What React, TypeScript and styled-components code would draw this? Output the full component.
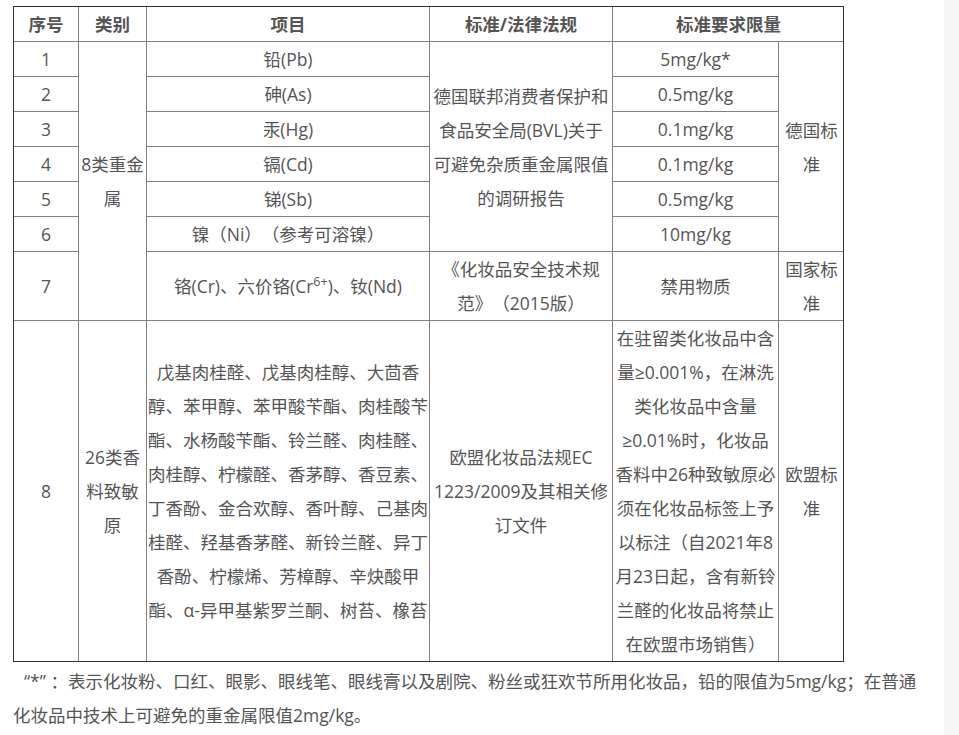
import React from "react";
import styled, { createGlobalStyle } from "styled-components";

const GlobalStyle = createGlobalStyle`
  body {
    margin: 0;
    background: #fff;
    font-family: "Open Sans", "Noto Sans CJK SC", sans-serif;
    text-spacing-trim: space-all;
  }
`;

const Page = styled.div`
  display: flex;
  height: 735px;
  overflow: hidden;
`;

const Main = styled.div`
  flex: 1;
  padding: 6px 0 0 13px;
  color: #555;
  font-size: 17.5px;
  line-height: 34px;
`;

const ScrollTrack = styled.div`
  width: 15px;
  background: #f7f7f7;
`;

const Frame = styled.div`
  width: 831px;
  box-sizing: border-box;
  border: 1px solid #333;
  overflow: hidden;
`;

const Table = styled.table`
  margin: -1px;
  width: 831px;
  border-collapse: collapse;
  table-layout: fixed;
`;

const Head = styled.th`
  border: 1px solid #808080;
  padding: 0 1px;
  font-weight: bold;
  color: #555;
  text-align: center;
  vertical-align: middle;
`;

const Cell = styled.td`
  border: 1px solid #808080;
  padding: 0 1px;
  text-align: center;
  vertical-align: middle;
  white-space: nowrap;
`;

const Sup = styled.sup`
  font-size: 12.5px;
  line-height: 0;
  vertical-align: 7px;
`;

const Note = styled.p`
  margin: 2px 0 0;
  width: 912px;
  text-indent: 11px;
`;

const Lines = (props: { lines: React.ReactNode[] }) => (
  <>
    {props.lines.map((line, i) => (
      <React.Fragment key={i}>
        {i > 0 && <br />}
        {line}
      </React.Fragment>
    ))}
  </>
);

const metals = [
  { no: "1", item: "铅(Pb)", limit: "5mg/kg*" },
  { no: "2", item: "砷(As)", limit: "0.5mg/kg" },
  { no: "3", item: "汞(Hg)", limit: "0.1mg/kg" },
  { no: "4", item: "镉(Cd)", limit: "0.1mg/kg" },
  { no: "5", item: "锑(Sb)", limit: "0.5mg/kg" },
  { no: "6", item: "镍（Ni）（参考可溶镍）", limit: "10mg/kg" },
];

const allergens = [
  "戊基肉桂醛、戊基肉桂醇、大茴香",
  "醇、苯甲醇、苯甲酸苄酯、肉桂酸苄",
  "酯、水杨酸苄酯、铃兰醛、肉桂醛、",
  "肉桂醇、柠檬醛、香茅醇、香豆素、",
  "丁香酚、金合欢醇、香叶醇、己基肉",
  "桂醛、羟基香茅醛、新铃兰醛、异丁",
  "香酚、柠檬烯、芳樟醇、辛炔酸甲",
  "酯、α-异甲基紫罗兰酮、树苔、橡苔",
];

const euLimit = [
  "在驻留类化妆品中含",
  "量≥0.001%，在淋洗",
  "类化妆品中含量",
  "≥0.01%时，化妆品",
  "香料中26种致敏原必",
  "须在化妆品标签上予",
  "以标注（自2021年8",
  "月23日起，含有新铃",
  "兰醛的化妆品将禁止",
  "在欧盟市场销售）",
];

const App = () => {
  return (
    <Page>
      <GlobalStyle />
      <Main>
        <Frame>
          <Table>
            <colgroup>
              <col style={{ width: 65 }} />
              <col style={{ width: 68 }} />
              <col style={{ width: 283 }} />
              <col style={{ width: 183 }} />
              <col style={{ width: 166 }} />
              <col style={{ width: 66 }} />
            </colgroup>
            <thead>
              <tr>
                <Head>序号</Head>
                <Head>类别</Head>
                <Head>项目</Head>
                <Head>标准/法律法规</Head>
                <Head colSpan={2}>标准要求限量</Head>
              </tr>
            </thead>
            <tbody>
              {metals.map((m, i) => (
                <tr key={m.no}>
                  <Cell>{m.no}</Cell>
                  {i === 0 && (
                    <Cell rowSpan={7}>
                      <Lines lines={["8类重金", "属"]} />
                    </Cell>
                  )}
                  <Cell>{m.item}</Cell>
                  {i === 0 && (
                    <Cell rowSpan={6}>
                      <Lines
                        lines={[
                          "德国联邦消费者保护和",
                          "食品安全局(BVL)关于",
                          "可避免杂质重金属限值",
                          "的调研报告",
                        ]}
                      />
                    </Cell>
                  )}
                  <Cell>{m.limit}</Cell>
                  {i === 0 && (
                    <Cell rowSpan={6}>
                      <Lines lines={["德国标", "准"]} />
                    </Cell>
                  )}
                </tr>
              ))}
              <tr>
                <Cell>7</Cell>
                <Cell>
                  铬(Cr)、六价铬(Cr<Sup>6+</Sup>)、钕(Nd)
                </Cell>
                <Cell>
                  <Lines lines={["《化妆品安全技术规", "范》（2015版）"]} />
                </Cell>
                <Cell>禁用物质</Cell>
                <Cell>
                  <Lines lines={["国家标", "准"]} />
                </Cell>
              </tr>
              <tr>
                <Cell>8</Cell>
                <Cell>
                  <Lines lines={["26类香", "料致敏", "原"]} />
                </Cell>
                <Cell>
                  <Lines lines={allergens} />
                </Cell>
                <Cell>
                  <Lines
                    lines={["欧盟化妆品法规EC", "1223/2009及其相关修", "订文件"]}
                  />
                </Cell>
                <Cell>
                  <Lines lines={euLimit} />
                </Cell>
                <Cell>
                  <Lines lines={["欧盟标", "准"]} />
                </Cell>
              </tr>
            </tbody>
          </Table>
        </Frame>
        <Note>
          “*” ：表示化妆粉、口红、眼影、眼线笔、眼线膏以及剧院、粉丝或狂欢节所用化妆品，铅的限值为5mg/kg；在普通化妆品中技术上可避免的重金属限值2mg/kg。
        </Note>
      </Main>
      <ScrollTrack />
    </Page>
  );
};

export default App;
